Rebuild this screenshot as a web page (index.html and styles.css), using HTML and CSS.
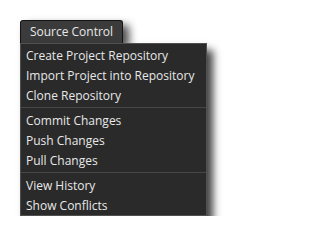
FILE: index.html
```html
<!DOCTYPE html>
<html>
<head>
<meta charset="utf-8">
<link rel="stylesheet" href="styles.css">
</head>
<body>
<div class="wrap">
  <div class="tab">Source Control</div>
  <div class="menu">
    <div class="item">Create Project Repository</div>
    <div class="item">Import Project into Repository</div>
    <div class="item">Clone Repository</div>
    <div class="sep"></div>
    <div class="item">Commit Changes</div>
    <div class="item">Push Changes</div>
    <div class="item">Pull Changes</div>
    <div class="sep"></div>
    <div class="item">View History</div>
    <div class="item">Show Conflicts</div>
  </div>
</div>
</body>
</html>
```

FILE: styles.css
```css
html, body {
  margin: 0;
  padding: 0;
  background: #ffffff;
}
.wrap {
  padding: 20px 0 0 20px;
  font-family: "Open Sans", "Noto Sans", sans-serif;
  font-size: 12px;
  color: #e8e8e8;
}
.tab {
  box-sizing: border-box;
  width: 103px;
  height: 23px;
  background: #3b3b3b;
  border: 1px solid #151515;
  border-bottom: none;
  border-radius: 3px 3px 0 0;
  line-height: 21px;
  text-align: center;
  box-shadow: 6px 5px 8px rgba(0, 0, 0, 0.7);
}
.menu {
  position: relative;
  box-sizing: border-box;
  width: 187px;
  background: #2a2a2a;
  border: 1px solid #505050;
  padding: 1px 0 0 0;
  box-shadow: 6px 7px 8px rgba(0, 0, 0, 0.75);
}
.item {
  height: 20px;
  line-height: 21px;
  padding-left: 5px;
  white-space: nowrap;
}
.sep {
  height: 1px;
  margin: 2px 0 2px 0;
  background: #474747;
}
```
